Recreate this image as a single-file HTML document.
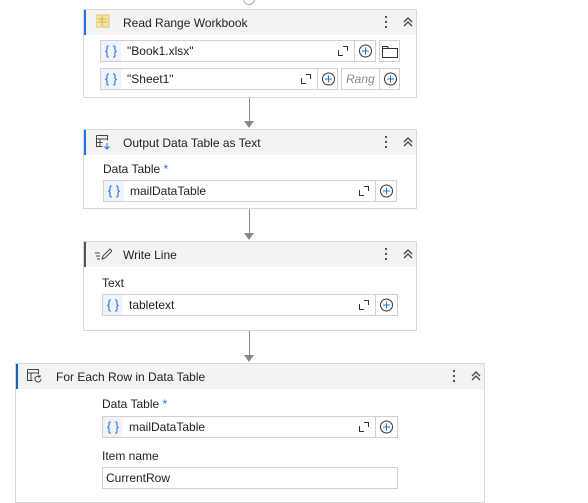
<!DOCTYPE html>
<html><head><style>
*{margin:0;padding:0;box-sizing:border-box}
body{width:588px;height:499px;background:#fff;font-family:"Liberation Sans",sans-serif;font-size:12px;color:#1f1f1f;position:relative;overflow:hidden}
.a{position:absolute}
.card{position:absolute;border:1px solid #d6d6d6;background:#fff}
.hd{position:absolute;left:0;right:0;top:0;height:25px;background:#f3f3f3;border-left:2px solid #1a73e8}
.hd .t{position:absolute;left:37px;top:6px;font-size:12px;color:#222}
.dots{position:absolute;top:6px;width:3px;font-size:0}
.dots i{display:block;width:2px;height:2px;background:#555;margin-bottom:3px}
.chev{position:absolute;top:5px;font-size:0}
.inp{position:absolute;border:1px solid #d0d0d0;background:#fff;height:22px}
.br{position:absolute;left:0;top:0;width:20px;height:20px;background:#f0f3f7;color:#1a73e8;font-size:13px;text-align:center;line-height:19px}
.v{position:absolute;left:26px;top:3px;font-size:12px}
.ex{position:absolute;top:5px;width:10px;height:10px}
.pl{position:absolute;top:-1px;width:21px;height:22px;border-left:1px solid #d0d0d0}
.lbl{position:absolute;font-size:12px}
.line{position:absolute;width:1px;background:#888;left:249px}
.arr{position:absolute;left:244px;width:0;height:0;border-left:5px solid transparent;border-right:5px solid transparent;border-top:7px solid #888}
</style></head><body>
<svg class="a" style="left:242px;top:-8px" width="14" height="14"><circle cx="7" cy="7" r="5.5" fill="none" stroke="#aaa"/></svg>

<!-- card1 -->
<div class="card" style="left:83px;top:9px;width:334px;height:89px">
 <div class="hd"><svg class="a" style="left:10px;top:4px" width="16" height="16"><rect x="0" y="1" width="13" height="12" fill="#f3e7a6" stroke="#d9c56a"/><path d="M2 5h9M2 8h9M6 2v10" stroke="#c9b355"/></svg><span class="t">Read Range Workbook</span>
 <div class="dots" style="left:299px"><i></i><i></i><i></i></div>
 <svg class="chev" style="left:316px" width="12" height="14"><path d="M2 7l4-4 4 4M2 11l4-4 4 4" fill="none" stroke="#444" stroke-width="1.3"/></svg></div>
 <div class="inp" style="left:16px;top:30px;width:276px"><div class="br">{ }</div><span class="v">"Book1.xlsx"</span>
  <svg class="ex" style="left:237px"><path d="M0.5 4v5.5H5M5 .5h4.5V5" fill="none" stroke="#333"/></svg>
  <div class="pl" style="left:253px"><svg width="21" height="22"><circle cx="10.5" cy="11" r="6" fill="none" stroke="#333"/><path d="M10.5 7.5v7M7 11h7" stroke="#1a73e8"/></svg></div></div>
 <div class="inp" style="left:295px;top:30px;width:21px"><svg width="20" height="20"><path d="M2.5 5.5h5l1 2h9v9h-15z M2.5 7.5h15" fill="none" stroke="#333"/></svg></div>
 <div class="inp" style="left:16px;top:58px;width:238px"><div class="br">{ }</div><span class="v">"Sheet1"</span>
  <svg class="ex" style="left:200px"><path d="M0.5 4v5.5H5M5 .5h4.5V5" fill="none" stroke="#333"/></svg>
  <div class="pl" style="left:216px"><svg width="21" height="22"><circle cx="10.5" cy="11" r="6" fill="none" stroke="#333"/><path d="M10.5 7.5v7M7 11h7" stroke="#1a73e8"/></svg></div></div>
 <div class="inp" style="left:257px;top:58px;width:59px;overflow:hidden"><span class="a" style="left:4px;top:3px;font-style:italic;color:#888">Rang</span>
  <div class="pl" style="left:37px"><svg width="21" height="22"><circle cx="10.5" cy="11" r="6" fill="none" stroke="#333"/><path d="M10.5 7.5v7M7 11h7" stroke="#1a73e8"/></svg></div></div>
</div>
<div class="line" style="top:98px;height:24px"></div><div class="arr" style="top:121px"></div>

<!-- card2 -->
<div class="card" style="left:83px;top:129px;width:334px;height:80px">
 <div class="hd"><svg class="a" style="left:10px;top:5px" width="16" height="16"><path d="M.5 .5h11v5M.5 .5v11h6M.5 4h11M4 4v7.5M.5 7.5h6" fill="none" stroke="#444"/><path d="M11 8v6M8.5 11.5l2.5 2.5 2.5-2.5" fill="none" stroke="#1a73e8"/></svg><span class="t">Output Data Table as Text</span>
 <div class="dots" style="left:299px"><i></i><i></i><i></i></div>
 <svg class="chev" style="left:316px" width="12" height="14"><path d="M2 7l4-4 4 4M2 11l4-4 4 4" fill="none" stroke="#444" stroke-width="1.3"/></svg></div>
 <div class="lbl" style="left:19px;top:32px">Data Table <span style="color:#1a73e8">*</span></div>
 <div class="inp" style="left:19px;top:50px;width:294px"><div class="br">{ }</div><span class="v">mailDataTable</span>
  <svg class="ex" style="left:255px"><path d="M0.5 4v5.5H5M5 .5h4.5V5" fill="none" stroke="#333"/></svg>
  <div class="pl" style="left:271px"><svg width="21" height="22"><circle cx="10.5" cy="11" r="6" fill="none" stroke="#333"/><path d="M10.5 7.5v7M7 11h7" stroke="#1a73e8"/></svg></div></div>
</div>
<div class="line" style="top:209px;height:25px"></div><div class="arr" style="top:233px"></div>

<!-- card3 -->
<div class="card" style="left:83px;top:241px;width:334px;height:90px">
 <div class="hd" style="border-left-color:#555"><svg class="a" style="left:8px;top:5px" width="18" height="16"><path d="M1 6h5M2 9h4M3 12h3" stroke="#444"/><path d="M8 12l1-3 7-7 2 2-7 7z" fill="none" stroke="#444"/></svg><span class="t">Write Line</span>
 <div class="dots" style="left:299px"><i></i><i></i><i></i></div>
 <svg class="chev" style="left:316px" width="12" height="14"><path d="M2 7l4-4 4 4M2 11l4-4 4 4" fill="none" stroke="#444" stroke-width="1.3"/></svg></div>
 <div class="lbl" style="left:18px;top:34px">Text</div>
 <div class="inp" style="left:18px;top:52px;width:296px"><div class="br">{ }</div><span class="v">tabletext</span>
  <svg class="ex" style="left:256px"><path d="M0.5 4v5.5H5M5 .5h4.5V5" fill="none" stroke="#333"/></svg>
  <div class="pl" style="left:272px"><svg width="21" height="22"><circle cx="10.5" cy="11" r="6" fill="none" stroke="#333"/><path d="M10.5 7.5v7M7 11h7" stroke="#1a73e8"/></svg></div></div>
</div>
<div class="line" style="top:331px;height:25px"></div><div class="arr" style="top:355px"></div>

<!-- card4 -->
<div class="card" style="left:15px;top:363px;width:470px;height:140px">
 <div class="hd" style="border-left-color:#1a5fb4"><svg class="a" style="left:9px;top:5px" width="18" height="16"><path d="M.5 .5h11v5M.5 .5v11h5M.5 4h11M4 4v7.5" fill="none" stroke="#444"/><path d="M14 10a3 3 0 1 1-1-2.2M13 6v2h-2" fill="none" stroke="#444"/></svg><span class="t" style="left:38px">For Each Row in Data Table</span>
 <div class="dots" style="left:435px"><i></i><i></i><i></i></div>
 <svg class="chev" style="left:452px" width="12" height="14"><path d="M2 7l4-4 4 4M2 11l4-4 4 4" fill="none" stroke="#444" stroke-width="1.3"/></svg></div>
 <div class="lbl" style="left:86px;top:33px">Data Table <span style="color:#1a73e8">*</span></div>
 <div class="inp" style="left:86px;top:52px;width:296px"><div class="br">{ }</div><span class="v">mailDataTable</span>
  <svg class="ex" style="left:256px"><path d="M0.5 4v5.5H5M5 .5h4.5V5" fill="none" stroke="#333"/></svg>
  <div class="pl" style="left:272px"><svg width="21" height="22"><circle cx="10.5" cy="11" r="6" fill="none" stroke="#333"/><path d="M10.5 7.5v7M7 11h7" stroke="#1a73e8"/></svg></div></div>
 <div class="lbl" style="left:86px;top:85px">Item name</div>
 <div class="inp" style="left:86px;top:103px;width:296px"><span class="a" style="left:3px;top:3px">CurrentRow</span></div>
</div>
</body></html>
